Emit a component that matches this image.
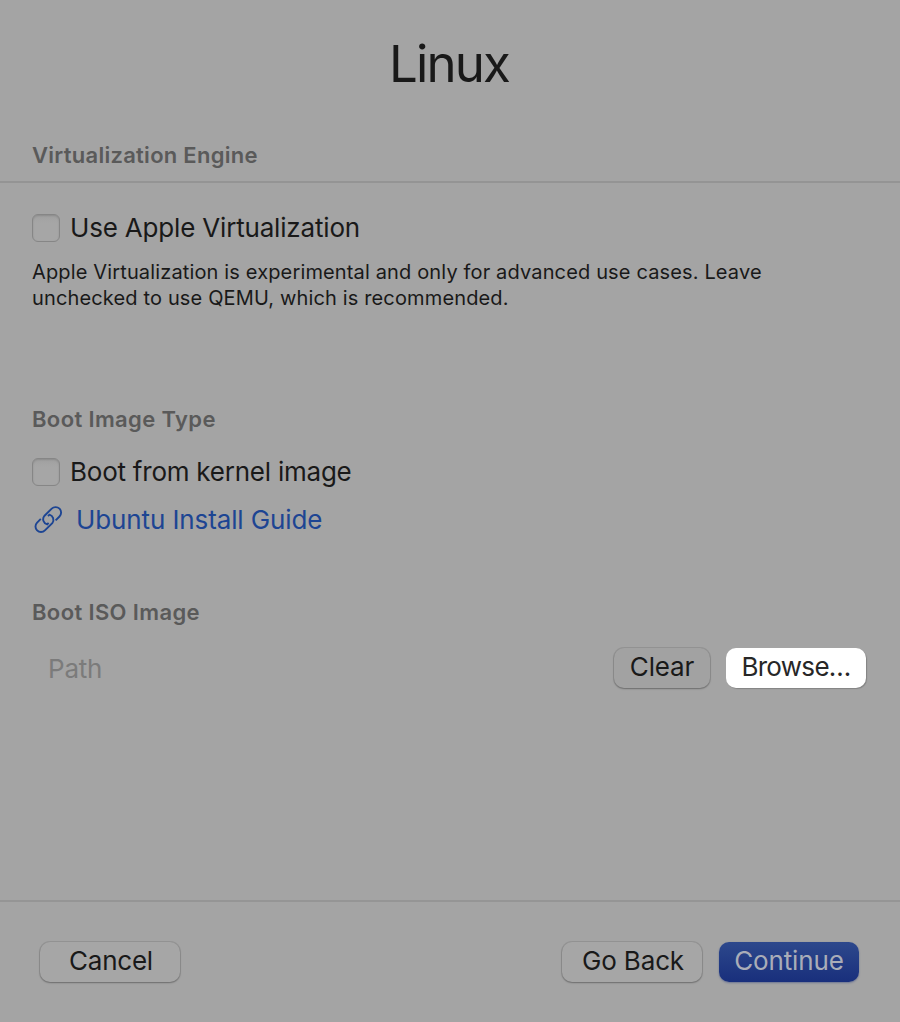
<script lang="ts">
  const actions = ['Cancel', 'Go Back', 'Continue'];
</script>

<main>
  <h1>Linux</h1>
  <h2 class="engine">Virtualization Engine</h2>
  <section class="virtual">
    <label><input type="checkbox" /><span class="apple">Use Apple Virtualization</span></label>
    <p>Apple Virtualization is experimental and only for advanced use cases. Leave<br />unchecked to use QEMU, which is recommended.</p>
  </section>
  <section class="boot">
    <h2>Boot Image Type</h2>
    <label><input type="checkbox" /><span class="kernel">Boot from kernel image</span></label>
    <a href="#guide">
      <svg width="30" height="30" viewBox="0 0 30 30" fill="none" stroke="currentColor" stroke-width="1.9">
        <path d="M22.6 15.4L26.5 11.5A5.5 5.5 0 0 0 18.7 3.7L11.3 11A5.3 5.3 0 0 0 14.2 19.4L15.6 17.9" />
        <path d="M7.8 13.9L4.1 17.6A5.5 5.5 0 0 0 11.9 25.4L19.3 18.1A5.3 5.3 0 0 0 16.4 9.7L15 11.2" />
      </svg>
      <span class="guide">Ubuntu Install Guide</span>
    </a>
  </section>
  <section class="iso">
    <h2>Boot ISO Image</h2>
    <div class="path"><span class="ph">Path</span><button class="clear">Clear</button><button class="browse">Browse…</button></div>
  </section>
  <footer>
    <button class="cancel">{actions[0]}</button>
    <button class="back">{actions[1]}</button>
    <button class="continue">{actions[2]}</button>
  </footer>
</main>

<style>
  :global(body) { margin: 0; background: #a4a4a4; }
  * { box-sizing: border-box; }
  main { height: 1022px; background: #a4a4a4; color: #191919; font-family: Inter, sans-serif; font-size: 26px; display: flex; flex-direction: column; }
  h1, h2, p { margin: 0; }
  h1 { height: 130px; font-size: 51px; font-weight: 430; line-height: 127px; text-align: center; letter-spacing: -1.9px; padding-right: 2px; }
  h2 { font-size: 22px; line-height: 30px; color: #5a5a5a; font-weight: 600; letter-spacing: .37px; }
  .engine { height: 53px; padding: 10px 32px; border-bottom: 2px solid #949494; letter-spacing: .27px; }
  .virtual { height: 221px; padding: 29px 32px; }
  label { display: flex; align-items: center; gap: 10px; height: 32px; }
  input { appearance: none; width: 28px; height: 28px; margin: 0; border: 1px solid #868686; border-radius: 6px; background: linear-gradient(#a0a0a0, #a6a6a6 30%); box-shadow: inset 0 1px 2px #0002; }
  label span, .guide { padding-bottom: 2px; letter-spacing: -.18px; }
  .kernel { letter-spacing: -.23px; }
  .guide { letter-spacing: -.11px; }
  p { margin-top: 15px; font-size: 20px; line-height: 26px; white-space: nowrap; letter-spacing: .145px; }
  .boot { height: 193px; padding: 0 32px; }
  .boot label { margin-top: 22px; }
  a { margin-top: 16px; height: 32px; display: flex; align-items: center; gap: 13px; padding-left: 1px; color: #1d4593; text-decoration: none; }
  .iso { height: 303px; padding: 0 32px; }
  .path { display: flex; align-items: center; margin-top: 20px; height: 42px; }
  .ph { color: #7b7b7b; margin: 1px auto 0 16px; letter-spacing: -.2px; }
  button { font: inherit; color: #191919; padding: 0 0 3px; border: 0; border-radius: 10px; background: #a6a6a6; height: 40px; box-shadow: 0 0 0 1px #00000018, 0 1px 2px #0004; white-space: nowrap; letter-spacing: -.15px; }
  .clear { width: 96px; margin-right: 16px; background: #a2a2a2; }
  .browse { width: 140px; margin-right: 2px; background: white; color: #272727; box-shadow: 1px 1px 1px #0003; letter-spacing: -.7px; }
  footer { height: 122px; border-top: 2px solid #959595; display: flex; align-items: center; padding: 0 41px 0 40px; }
  .cancel { width: 140px; margin-right: auto; padding-left: 2px; letter-spacing: -.25px; }
  .back { width: 140px; margin-right: 17px; padding-left: 2px; }
  .continue { width: 140px; color: #a9adb8; background: linear-gradient(#2d488c, #192f7c); box-shadow: 0 1px 2px #192f7c66; }
</style>
